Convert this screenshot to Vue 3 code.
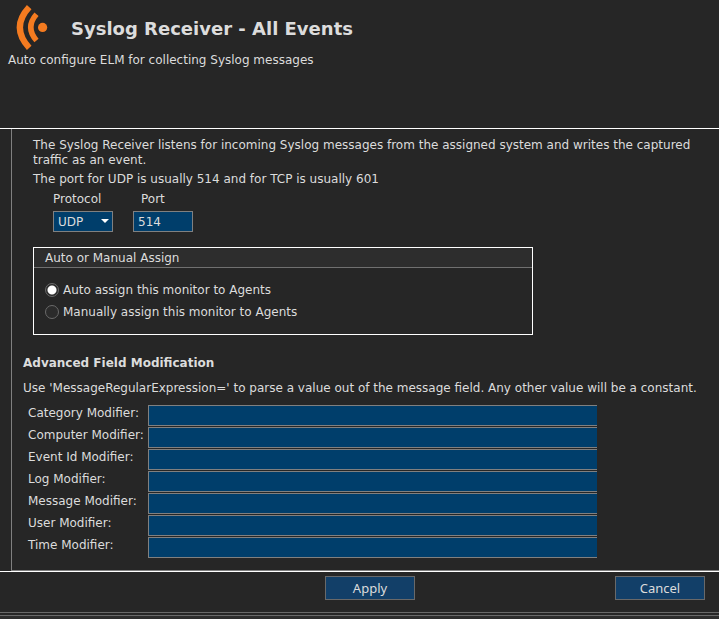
<script setup>
import { ref } from 'vue'

const protocol = ref('UDP')
const port = ref('514')
const assign = ref('auto')
const modifiers = ref([
  { id: 'category', label: 'Category Modifier:', value: '' },
  { id: 'computer', label: 'Computer Modifier:', value: '' },
  { id: 'event-id', label: 'Event Id Modifier:', value: '' },
  { id: 'log', label: 'Log Modifier:', value: '' },
  { id: 'message', label: 'Message Modifier:', value: '' },
  { id: 'user', label: 'User Modifier:', value: '' },
  { id: 'time', label: 'Time Modifier:', value: '' }
])
</script>

<template>
  <div class="dialog">
    <header class="header">
      <div class="title-row">
        <svg class="logo" width="36" height="48" viewBox="0 0 36 48" aria-hidden="true">
          <g fill="none" stroke="#f47b20">
            <path d="M14.200 2.200Q-4.500 22.400 14.200 42.800" stroke-width="6.200" />
            <path d="M21.500 9.300Q10 22.400 21.500 35.500" stroke-width="5.500" />
          </g>
          <circle cx="27.600" cy="22.400" r="4.600" fill="#f47b20" />
        </svg>
        <h1>Syslog Receiver - All Events</h1>
      </div>
      <p class="subtitle">Auto configure ELM for collecting Syslog messages</p>
    </header>

    <main class="body">
      <div class="panel">
        <section class="general">
          <p>The Syslog Receiver listens for incoming Syslog messages from the assigned system and writes the captured traffic as an event.</p>
          <p>The port for UDP is usually 514 and for TCP is usually 601</p>
          <div class="ports">
            <div class="port-field">
              <label for="protocol">Protocol</label>
              <div class="select">
                <select id="protocol" v-model="protocol">
                  <option>UDP</option>
                  <option>TCP</option>
                </select>
                <svg class="arrow" width="8" height="4" viewBox="0 0 8 4" aria-hidden="true">
                  <path d="M0 0H8L4 4Z" fill="#fff" />
                </svg>
              </div>
            </div>
            <div class="port-field">
              <label class="port-label" for="port">Port</label>
              <input id="port" v-model="port" class="box" type="text" />
            </div>
          </div>
          <fieldset class="group" aria-labelledby="assign-title">
            <div id="assign-title" class="group-title">Auto or Manual Assign</div>
            <div class="options">
              <label><input v-model="assign" type="radio" name="assign" value="auto" />Auto assign this monitor to Agents</label>
              <label><input v-model="assign" type="radio" name="assign" value="manual" />Manually assign this monitor to Agents</label>
            </div>
          </fieldset>
        </section>

        <section class="advanced">
          <h2>Advanced Field Modification</h2>
          <p>Use 'MessageRegularExpression=' to parse a value out of the message field. Any other value will be a constant.</p>
          <div class="modifiers">
            <div v-for="m in modifiers" :key="m.id" class="modifier">
              <label :for="m.id">{{ m.label }}</label>
              <input :id="m.id" v-model="m.value" type="text" />
            </div>
          </div>
        </section>
      </div>
    </main>

    <footer class="footer">
      <button type="button">Apply</button>
      <button type="button">Cancel</button>
    </footer>
    <div class="status"></div>
  </div>
</template>

<style>
body {
  background: #262626;
}
</style>

<style scoped>
.dialog {
  display: flex;
  flex-direction: column;
  min-height: 100vh;
  color: #dcdcdc;
  font: 12px/15px "DejaVu Sans", Verdana, sans-serif;
}
.dialog * {
  box-sizing: border-box;
}
h1, h2, p {
  margin: 0;
}
.header {
  height: 128px;
  padding: 5px 8px;
}
.title-row {
  display: flex;
  align-items: center;
  gap: 20px;
  padding-left: 7px;
}
.logo {
  display: block;
}
h1 {
  font-size: 18px;
  line-height: 22px;
}
.body {
  flex: 1;
  border-top: 1px solid #fff;
  border-bottom: 1px solid #fff;
  padding-left: 11px;
}
.panel {
  min-height: 100%;
  border-left: 1px solid #808080;
  border-bottom: 1px solid #808080;
  padding: 9px 16px 12px 11px;
}
.general {
  padding-left: 10px;
}
.general p + p {
  margin-top: 4px;
}
.ports {
  display: flex;
  gap: 20px;
  padding: 5px 0 0 20px;
}
.port-field {
  display: flex;
  flex-direction: column;
  gap: 4px;
  width: 60px;
}
.port-label {
  padding-left: 8px;
}
.select {
  position: relative;
}
select, input {
  font: inherit;
  color: #dcdcdc;
}
select, .box {
  appearance: none;
  display: block;
  width: 100%;
  height: 21px;
  margin: 0;
  padding: 0 4px;
  border: 1px solid #808080;
  border-radius: 0;
  background: #003e6b;
}
select {
  padding-top: 1px;
}
.arrow {
  position: absolute;
  right: 4px;
  top: 8px;
  pointer-events: none;
}
.group {
  max-width: 500px;
  margin: 15px 0 0;
  padding: 0;
  border: 1px solid #fff;
}
.group-title {
  height: 20px;
  padding: 3px 11px 1px;
  border-bottom: 1px solid #707070;
  background: #2d2d2d;
}
.options {
  display: flex;
  flex-direction: column;
  gap: 7px;
  padding: 15px 11px 14px;
}
.options label {
  display: flex;
  align-items: flex-start;
  gap: 4px;
}
.options input {
  appearance: none;
  width: 14px;
  height: 14px;
  margin: 0;
  border: 1px solid #6a6a6a;
  border-radius: 50%;
  background: #2b2b2b;
}
.options input:checked {
  background: radial-gradient(circle, #fff 4px, #2b2b2b 5px);
}
.advanced {
  padding-top: 21px;
}
h2 {
  font-size: 12px;
  line-height: 15px;
}
.advanced p {
  margin-top: 10px;
}
.modifiers {
  display: grid;
  gap: 1px;
  max-width: 574px;
  padding-top: 9px;
}
.modifier {
  display: grid;
  grid-template-columns: 120px 1fr;
  padding-left: 5px;
}
.modifier label {
  padding-top: 1px;
}
.modifier input {
  width: 100%;
  height: 21px;
  margin: 0;
  padding: 0 4px;
  border: 1px solid #808080;
  border-right: 0;
  border-radius: 0;
  background: #003e6b;
}
.footer {
  display: flex;
  justify-content: flex-end;
  gap: 200px;
  padding: 4px 14px 12px;
}
button {
  width: 90px;
  height: 24px;
  padding: 0;
  border: 1px solid #696969;
  border-radius: 0;
  background: #123f68;
  color: #dcdcdc;
  font: 13px/15px "Noto Sans", sans-serif;
}
.status {
  height: 7px;
  border-top: 1px solid #696969;
  background: linear-gradient(#262626 2px, #696969 2px, #696969 3px, #2d2d2d 3px);
}
</style>
